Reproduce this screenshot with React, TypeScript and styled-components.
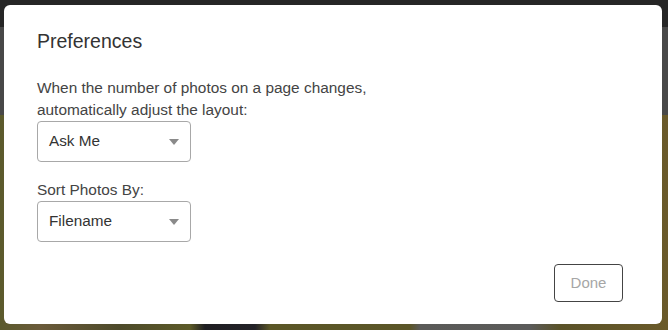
import React from "react";
import styled, { createGlobalStyle } from "styled-components";

const Global = createGlobalStyle`
  html, body { margin: 0; padding: 0; }
  body {
    width: 668px;
    height: 330px;
    overflow: hidden;
    font-family: "Liberation Sans", Arial, sans-serif;
  }
`;

const Backdrop = styled.div`
  width: 668px;
  height: 330px;
  box-sizing: border-box;
  padding: 5px 6px 6px 4px;
  display: flex;
  background:
    linear-gradient(to bottom, #262626 0px, #262626 27px, transparent 27px),
    linear-gradient(to bottom, #484848 0px, #484848 115px, transparent 115px),
    linear-gradient(
      to right,
      #5b5a2c 0px,
      #6a5a3a 40px,
      #4d4a2a 120px,
      #5c5a28 190px,
      #1f1e22 205px,
      #232228 255px,
      #5a5626 270px,
      #5a5528 410px,
      #5a5a58 420px,
      #5b5b5a 530px,
      #5a5228 560px,
      #6a5a2a 668px
    );
`;

const Dialog = styled.div`
  flex: 1;
  background: #fff;
  border-radius: 6px;
  box-sizing: border-box;
  padding: 25px 39px 22px 33px;
  display: flex;
  flex-direction: column;
  color: #3a3a3a;
`;

const Title = styled.h2`
  margin: 0 0 25px 0;
  font-size: 19.5px;
  font-weight: 400;
  line-height: 22px;
  color: #333;
`;

const Label = styled.div`
  font-size: 15.4px;
  line-height: 22px;
  color: #444;
`;

const Field = styled.div<{ $gap?: number }>`
  display: flex;
  flex-direction: column;
  align-items: flex-start;
  margin-bottom: ${(p) => p.$gap ?? 0}px;
`;

const Select = styled.div`
  width: 154px;
  height: 41px;
  box-sizing: border-box;
  border: 1px solid #a8a8a8;
  border-radius: 4px;
  display: flex;
  align-items: center;
  justify-content: space-between;
  padding: 0 11px 1px 11px;
  font-size: 15.3px;
  color: #333;
`;

const Caret = styled.span`
  width: 0;
  height: 0;
  border-left: 5.5px solid transparent;
  border-right: 5.5px solid transparent;
  border-top: 6px solid #8a8a8a;
  margin-top: 1px;
`;

const Footer = styled.div`
  margin-top: auto;
  display: flex;
  justify-content: flex-end;
`;

const DoneButton = styled.button`
  width: 69px;
  height: 38px;
  box-sizing: border-box;
  border: 1px solid #444;
  border-radius: 4px;
  background: #fff;
  color: #a6a6a6;
  font-family: "Liberation Sans", Arial, sans-serif;
  font-size: 15px;
  padding: 0 0 2px 0;
`;

export default function App() {
  return (
    <>
      <Global />
      <Backdrop>
        <Dialog>
          <Title>Preferences</Title>
          <Field $gap={17}>
            <Label>
              When the number of photos on a page changes,
              <br />
              automatically adjust the layout:
            </Label>
            <Select>
              <span>Ask Me</span>
              <Caret />
            </Select>
          </Field>
          <Field>
            <Label>Sort Photos By:</Label>
            <Select>
              <span>Filename</span>
              <Caret />
            </Select>
          </Field>
          <Footer>
            <DoneButton>Done</DoneButton>
          </Footer>
        </Dialog>
      </Backdrop>
    </>
  );
}
